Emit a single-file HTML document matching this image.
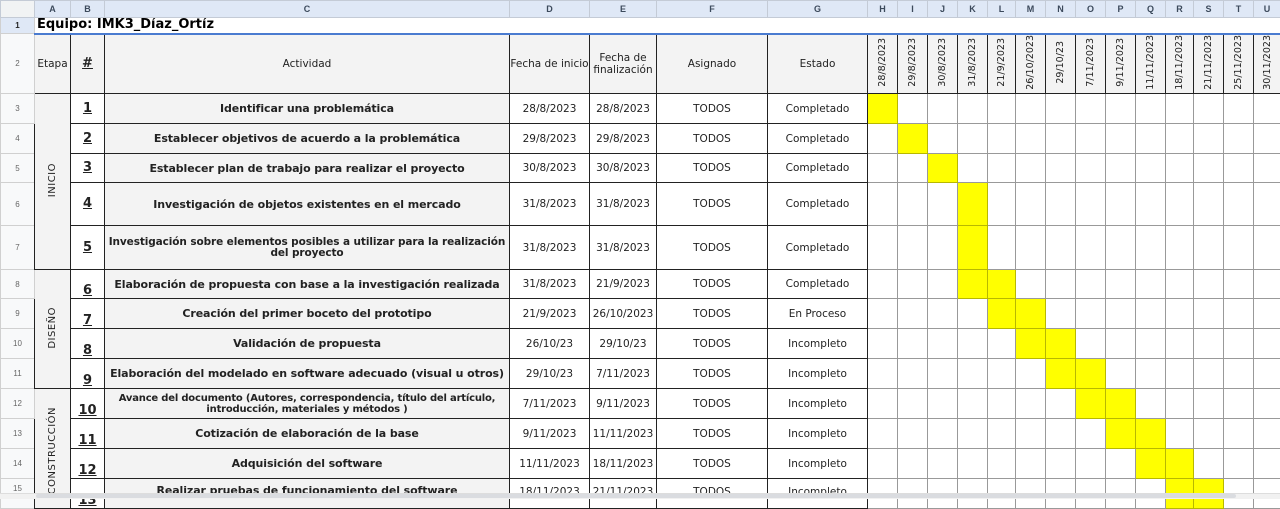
<!DOCTYPE html>
<html><head><meta charset="utf-8"><style>
body{margin:0;width:1280px;height:498px;overflow:hidden;background:#fff;font-family:"DejaVu Sans","Liberation Sans",sans-serif;}
table{border-collapse:collapse;table-layout:fixed;position:absolute;left:0;top:0;width:1280px;}
td{padding:0;border:1px solid #c0c0c0;font-size:10.5px;line-height:12px;text-align:center;vertical-align:middle;overflow:hidden;white-space:nowrap;color:#222;}
tr.ch td{background:#dfe8f6;color:#3c4a5c;font-size:9px;line-height:10px;font-weight:bold;height:16px;border-color:#c4cbd6;font-family:"Liberation Sans",sans-serif;}
td.rh{background:#f8f9fa;color:#666;font-size:8px;line-height:9px;font-family:"Liberation Sans",sans-serif;border-color:#d0d0d0;}
tr.ch td.rh{background:#f1f3f4;}
td.g{border-color:#999;}
td.y{background:#ffff00;border-color:#b8b800;}
td.d{border:1px solid #222;}
td.c{border:1px solid #222;background:#f3f3f3;font-weight:bold;font-size:11px;line-height:11px;font-family:"DejaVu Sans",sans-serif;letter-spacing:-0.1px;}
td.n{border:1px solid #222;font-weight:bold;text-decoration:underline;font-size:13px;line-height:14px;vertical-align:bottom;}
td.nm{vertical-align:middle;}
td.e{background:#f3f3f3;border:1px solid #222;}
td.e div{writing-mode:vertical-rl;transform:rotate(180deg);display:inline-block;font-size:10px;letter-spacing:.5px;}
tr.h2 td{background:#f3f3f3;border-color:#222;}
tr.h2 td.v div{writing-mode:vertical-rl;transform:rotate(180deg);display:inline-block;font-size:9.5px;line-height:11px;}
</style></head><body>
<table>
<colgroup><col style="width:34px"><col style="width:36px"><col style="width:34px"><col style="width:405px"><col style="width:80px"><col style="width:67px"><col style="width:111px"><col style="width:100px"><col style="width:30px"><col style="width:30px"><col style="width:30px"><col style="width:30px"><col style="width:28px"><col style="width:30px"><col style="width:30px"><col style="width:30px"><col style="width:30px"><col style="width:30px"><col style="width:28px"><col style="width:30px"><col style="width:30px"><col style="width:27px"></colgroup>
<tr class="ch"><td class="rh"></td><td>A</td><td>B</td><td>C</td><td>D</td><td>E</td><td>F</td><td>G</td><td>H</td><td>I</td><td>J</td><td>K</td><td>L</td><td>M</td><td>N</td><td>O</td><td>P</td><td>Q</td><td>R</td><td>S</td><td>T</td><td>U</td></tr>
<tr style="height:16px"><td class="rh" style="background:#dfe8f6;color:#222;font-weight:bold">1</td><td colspan="21" style="text-align:left;font-weight:bold;font-size:13px;line-height:14px;color:#000;border-color:#fff;border-bottom:2px solid #4a7bd0;padding-left:2px">Equipo: IMK3_Díaz_Ortíz</td></tr>
<tr class="h2" style="height:60px"><td class="rh" style="background:#f8f9fa;border-color:#d0d0d0">2</td><td>Etapa</td><td style="font-weight:bold;text-decoration:underline;font-size:13px">#</td><td>Actividad</td><td>Fecha de inicio</td><td style="white-space:normal;line-height:12px">Fecha de finalización</td><td>Asignado</td><td>Estado</td>
<td class="v"><div>28/8/2023</div></td><td class="v"><div>29/8/2023</div></td><td class="v"><div>30/8/2023</div></td><td class="v"><div>31/8/2023</div></td><td class="v"><div>21/9/2023</div></td><td class="v"><div>26/10/2023</div></td><td class="v"><div>29/10/23</div></td><td class="v"><div>7/11/2023</div></td><td class="v"><div>9/11/2023</div></td><td class="v"><div>11/11/2023</div></td><td class="v"><div>18/11/2023</div></td><td class="v"><div>21/11/2023</div></td><td class="v"><div>25/11/2023</div></td><td class="v"><div>30/11/2023</div></td></tr>

<tr style="height:30px"><td class="rh">3</td><td class="e" rowspan="5"><div>INICIO</div></td><td class="n nm">1</td><td class="c">Identificar una problemática</td><td class="d">28/8/2023</td><td class="d">28/8/2023</td><td class="d">TODOS</td><td class="d">Completado</td><td class="y"></td><td class="g"></td><td class="g"></td><td class="g"></td><td class="g"></td><td class="g"></td><td class="g"></td><td class="g"></td><td class="g"></td><td class="g"></td><td class="g"></td><td class="g"></td><td class="g"></td><td class="g"></td></tr>
<tr style="height:30px"><td class="rh">4</td><td class="n nm">2</td><td class="c">Establecer objetivos de acuerdo a la problemática</td><td class="d">29/8/2023</td><td class="d">29/8/2023</td><td class="d">TODOS</td><td class="d">Completado</td><td class="g"></td><td class="y"></td><td class="g"></td><td class="g"></td><td class="g"></td><td class="g"></td><td class="g"></td><td class="g"></td><td class="g"></td><td class="g"></td><td class="g"></td><td class="g"></td><td class="g"></td><td class="g"></td></tr>
<tr style="height:29px"><td class="rh">5</td><td class="n nm">3</td><td class="c">Establecer plan de trabajo para realizar el proyecto</td><td class="d">30/8/2023</td><td class="d">30/8/2023</td><td class="d">TODOS</td><td class="d">Completado</td><td class="g"></td><td class="g"></td><td class="y"></td><td class="g"></td><td class="g"></td><td class="g"></td><td class="g"></td><td class="g"></td><td class="g"></td><td class="g"></td><td class="g"></td><td class="g"></td><td class="g"></td><td class="g"></td></tr>
<tr style="height:43px"><td class="rh">6</td><td class="n nm">4</td><td class="c">Investigación de objetos existentes en el mercado</td><td class="d">31/8/2023</td><td class="d">31/8/2023</td><td class="d">TODOS</td><td class="d">Completado</td><td class="g"></td><td class="g"></td><td class="g"></td><td class="y"></td><td class="g"></td><td class="g"></td><td class="g"></td><td class="g"></td><td class="g"></td><td class="g"></td><td class="g"></td><td class="g"></td><td class="g"></td><td class="g"></td></tr>
<tr style="height:44px"><td class="rh">7</td><td class="n nm">5</td><td class="c" style="font-size:10.5px">Investigación sobre elementos posibles a utilizar para la realización<br>del proyecto</td><td class="d">31/8/2023</td><td class="d">31/8/2023</td><td class="d">TODOS</td><td class="d">Completado</td><td class="g"></td><td class="g"></td><td class="g"></td><td class="y"></td><td class="g"></td><td class="g"></td><td class="g"></td><td class="g"></td><td class="g"></td><td class="g"></td><td class="g"></td><td class="g"></td><td class="g"></td><td class="g"></td></tr>

<tr style="height:29px"><td class="rh">8</td><td class="e" rowspan="4"><div>DISEÑO</div></td><td class="n">6</td><td class="c">Elaboración de propuesta con base a la investigación realizada</td><td class="d">31/8/2023</td><td class="d">21/9/2023</td><td class="d">TODOS</td><td class="d">Completado</td><td class="g"></td><td class="g"></td><td class="g"></td><td class="y"></td><td class="y"></td><td class="g"></td><td class="g"></td><td class="g"></td><td class="g"></td><td class="g"></td><td class="g"></td><td class="g"></td><td class="g"></td><td class="g"></td></tr>
<tr style="height:30px"><td class="rh">9</td><td class="n">7</td><td class="c">Creación del primer boceto del prototipo</td><td class="d">21/9/2023</td><td class="d">26/10/2023</td><td class="d">TODOS</td><td class="d">En Proceso</td><td class="g"></td><td class="g"></td><td class="g"></td><td class="g"></td><td class="y"></td><td class="y"></td><td class="g"></td><td class="g"></td><td class="g"></td><td class="g"></td><td class="g"></td><td class="g"></td><td class="g"></td><td class="g"></td></tr>
<tr style="height:30px"><td class="rh">10</td><td class="n">8</td><td class="c">Validación de propuesta</td><td class="d">26/10/23</td><td class="d">29/10/23</td><td class="d">TODOS</td><td class="d">Incompleto</td><td class="g"></td><td class="g"></td><td class="g"></td><td class="g"></td><td class="g"></td><td class="y"></td><td class="y"></td><td class="g"></td><td class="g"></td><td class="g"></td><td class="g"></td><td class="g"></td><td class="g"></td><td class="g"></td></tr>
<tr style="height:30px"><td class="rh">11</td><td class="n">9</td><td class="c">Elaboración del modelado en software adecuado (visual u otros)</td><td class="d">29/10/23</td><td class="d">7/11/2023</td><td class="d">TODOS</td><td class="d">Incompleto</td><td class="g"></td><td class="g"></td><td class="g"></td><td class="g"></td><td class="g"></td><td class="g"></td><td class="y"></td><td class="y"></td><td class="g"></td><td class="g"></td><td class="g"></td><td class="g"></td><td class="g"></td><td class="g"></td></tr>

<tr style="height:30px"><td class="rh">12</td><td class="e" rowspan="4" style="vertical-align:top"><div style="margin-top:18px">CONSTRUCCIÓN</div></td><td class="n">10</td><td class="c" style="font-size:10px;letter-spacing:-0.2px">Avance del documento (Autores, correspondencia, título del artículo,<br>introducción, materiales y métodos )</td><td class="d">7/11/2023</td><td class="d">9/11/2023</td><td class="d">TODOS</td><td class="d">Incompleto</td><td class="g"></td><td class="g"></td><td class="g"></td><td class="g"></td><td class="g"></td><td class="g"></td><td class="g"></td><td class="y"></td><td class="y"></td><td class="g"></td><td class="g"></td><td class="g"></td><td class="g"></td><td class="g"></td></tr>
<tr style="height:30px"><td class="rh">13</td><td class="n">11</td><td class="c">Cotización de elaboración de la base</td><td class="d">9/11/2023</td><td class="d">11/11/2023</td><td class="d">TODOS</td><td class="d">Incompleto</td><td class="g"></td><td class="g"></td><td class="g"></td><td class="g"></td><td class="g"></td><td class="g"></td><td class="g"></td><td class="g"></td><td class="y"></td><td class="y"></td><td class="g"></td><td class="g"></td><td class="g"></td><td class="g"></td></tr>
<tr style="height:30px"><td class="rh">14</td><td class="n">12</td><td class="c">Adquisición del software</td><td class="d">11/11/2023</td><td class="d">18/11/2023</td><td class="d">TODOS</td><td class="d">Incompleto</td><td class="g"></td><td class="g"></td><td class="g"></td><td class="g"></td><td class="g"></td><td class="g"></td><td class="g"></td><td class="g"></td><td class="g"></td><td class="y"></td><td class="y"></td><td class="g"></td><td class="g"></td><td class="g"></td></tr>
<tr style="height:30px"><td class="rh" style="vertical-align:top;padding-top:5px">15</td><td class="n">13</td><td class="c" style="vertical-align:top;padding-top:6px">Realizar pruebas de funcionamiento del software</td><td class="d" style="vertical-align:top;padding-top:7px">18/11/2023</td><td class="d" style="vertical-align:top;padding-top:7px">21/11/2023</td><td class="d" style="vertical-align:top;padding-top:7px">TODOS</td><td class="d" style="vertical-align:top;padding-top:7px">Incompleto</td><td class="g"></td><td class="g"></td><td class="g"></td><td class="g"></td><td class="g"></td><td class="g"></td><td class="g"></td><td class="g"></td><td class="g"></td><td class="g"></td><td class="y"></td><td class="y"></td><td class="g"></td><td class="g"></td></tr>
</table>
<div style="position:absolute;left:0;top:493px;width:1280px;height:5px;background:#f1f1f1;border-top:1px solid #ddd"></div>
<div style="position:absolute;left:36px;top:494px;width:1200px;height:4px;background:#dadce0;border-radius:2px"></div>
</body></html>
